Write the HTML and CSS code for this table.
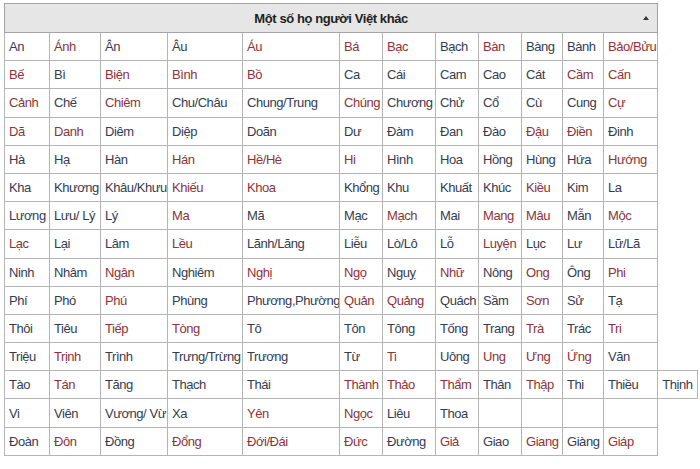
FILE: index.html
```html
<!DOCTYPE html>
<html lang="vi">
<head>
<meta charset="utf-8">
<title>Một số họ người Việt khác</title>
<link rel="stylesheet" href="styles.css">
</head>
<body>
<table class="navbox">
<colgroup>
<col class="c45"><col class="c51"><col class="c67"><col class="c75"><col class="c97"><col class="c43"><col class="c53"><col class="c43"><col class="c43"><col class="c41"><col class="c41"><col class="c54"><col class="c40">
</colgroup>
<tr class="head-row">
<th class="head" colspan="12"><div class="caption"><span class="spacer"></span><span class="title">Một số họ người Việt khác</span><span class="toggle"></span></div></th>
</tr>
<tr><td><a class="lk">An</a></td><td><a class="new">Ánh</a></td><td><a class="lk">Ân</a></td><td><a class="lk">Âu</a></td><td><a class="new">Áu</a></td><td><a class="new">Bá</a></td><td><a class="new">Bạc</a></td><td><a class="lk">Bạch</a></td><td><a class="new">Bàn</a></td><td><a class="lk">Bàng</a></td><td><a class="lk">Bành</a></td><td><a class="new">Bảo/Bửu</a></td></tr>
<tr><td><a class="new">Bế</a></td><td><a class="lk">Bì</a></td><td><a class="new">Biện</a></td><td><a class="new">Bình</a></td><td><a class="new">Bồ</a></td><td><a class="lk">Ca</a></td><td><a class="lk">Cái</a></td><td><a class="lk">Cam</a></td><td><a class="lk">Cao</a></td><td><a class="lk">Cát</a></td><td><a class="new">Cầm</a></td><td><a class="new">Cấn</a></td></tr>
<tr><td><a class="new">Cảnh</a></td><td><a class="lk">Chế</a></td><td><a class="new">Chiêm</a></td><td><a class="lk">Chu/Châu</a></td><td><a class="lk">Chung/Trung</a></td><td><a class="new">Chúng</a></td><td><a class="lk">Chương</a></td><td><a class="lk">Chử</a></td><td><a class="lk">Cổ</a></td><td><a class="lk">Cù</a></td><td><a class="lk">Cung</a></td><td><a class="new">Cự</a></td></tr>
<tr><td><a class="new">Dã</a></td><td><a class="new">Danh</a></td><td><a class="lk">Diêm</a></td><td><a class="lk">Diệp</a></td><td><a class="lk">Doãn</a></td><td><a class="lk">Dư</a></td><td><a class="lk">Đàm</a></td><td><a class="lk">Đan</a></td><td><a class="lk">Đào</a></td><td><a class="new">Đậu</a></td><td><a class="new">Điền</a></td><td><a class="lk">Đinh</a></td></tr>
<tr><td><a class="lk">Hà</a></td><td><a class="lk">Hạ</a></td><td><a class="lk">Hàn</a></td><td><a class="new">Hán</a></td><td><a class="new">Hề/Hè</a></td><td><a class="new">Hi</a></td><td><a class="lk">Hình</a></td><td><a class="lk">Hoa</a></td><td><a class="lk">Hồng</a></td><td><a class="lk">Hùng</a></td><td><a class="lk">Hứa</a></td><td><a class="new">Hướng</a></td></tr>
<tr><td><a class="lk">Kha</a></td><td><a class="lk">Khương</a></td><td><a class="lk">Khâu/Khưu</a></td><td><a class="new">Khiếu</a></td><td><a class="new">Khoa</a></td><td><a class="lk">Khổng</a></td><td><a class="lk">Khu</a></td><td><a class="lk">Khuất</a></td><td><a class="lk">Khúc</a></td><td><a class="new">Kiều</a></td><td><a class="lk">Kim</a></td><td><a class="lk">La</a></td></tr>
<tr><td><a class="lk">Lương</a></td><td><a class="lk">Lưu/ Lý</a></td><td><a class="lk">Lý</a></td><td><a class="new">Ma</a></td><td><a class="lk">Mã</a></td><td><a class="lk">Mạc</a></td><td><a class="new">Mạch</a></td><td><a class="lk">Mai</a></td><td><a class="new">Mang</a></td><td><a class="new">Mâu</a></td><td><a class="lk">Mẫn</a></td><td><a class="new">Mộc</a></td></tr>
<tr><td><a class="new">Lạc</a></td><td><a class="lk">Lại</a></td><td><a class="lk">Lâm</a></td><td><a class="new">Lều</a></td><td><a class="lk">Lãnh/Lăng</a></td><td><a class="lk">Liễu</a></td><td><a class="lk">Lò/Lô</a></td><td><a class="lk">Lỗ</a></td><td><a class="new">Luyện</a></td><td><a class="lk">Lục</a></td><td><a class="lk">Lư</a></td><td><a class="lk">Lữ/Lã</a></td></tr>
<tr><td><a class="lk">Ninh</a></td><td><a class="lk">Nhâm</a></td><td><a class="new">Ngân</a></td><td><a class="lk">Nghiêm</a></td><td><a class="new">Nghị</a></td><td><a class="new">Ngọ</a></td><td><a class="lk">Nguỵ</a></td><td><a class="new">Nhữ</a></td><td><a class="lk">Nông</a></td><td><a class="new">Ong</a></td><td><a class="lk">Ông</a></td><td><a class="new">Phi</a></td></tr>
<tr><td><a class="lk">Phí</a></td><td><a class="lk">Phó</a></td><td><a class="new">Phú</a></td><td><a class="lk">Phùng</a></td><td><a class="lk">Phương,Phường</a></td><td><a class="new">Quản</a></td><td><a class="new">Quảng</a></td><td><a class="lk">Quách</a></td><td><a class="lk">Sầm</a></td><td><a class="new">Sơn</a></td><td><a class="lk">Sử</a></td><td><a class="lk">Tạ</a></td></tr>
<tr><td><a class="lk">Thôi</a></td><td><a class="lk">Tiêu</a></td><td><a class="new">Tiếp</a></td><td><a class="new">Tòng</a></td><td><a class="lk">Tô</a></td><td><a class="lk">Tôn</a></td><td><a class="lk">Tông</a></td><td><a class="lk">Tống</a></td><td><a class="lk">Trang</a></td><td><a class="new">Trà</a></td><td><a class="lk">Trác</a></td><td><a class="new">Tri</a></td></tr>
<tr><td><a class="lk">Triệu</a></td><td><a class="new">Trịnh</a></td><td><a class="lk">Trình</a></td><td><a class="lk">Trưng/Trừng</a></td><td><a class="lk">Trương</a></td><td><a class="lk">Từ</a></td><td><a class="new">Ti</a></td><td><a class="lk">Uông</a></td><td><a class="new">Ung</a></td><td><a class="new">Ưng</a></td><td><a class="new">Ứng</a></td><td><a class="lk">Văn</a></td></tr>
<tr><td><a class="lk">Tào</a></td><td><a class="new">Tán</a></td><td><a class="lk">Tăng</a></td><td><a class="lk">Thạch</a></td><td><a class="lk">Thái</a></td><td><a class="new">Thành</a></td><td><a class="new">Thảo</a></td><td><a class="new">Thẩm</a></td><td><a class="lk">Thân</a></td><td><a class="new">Thập</a></td><td><a class="lk">Thi</a></td><td><a class="lk">Thiều</a></td><td><a class="lk">Thịnh</a></td></tr>
<tr><td><a class="lk">Vi</a></td><td><a class="lk">Viên</a></td><td><a class="lk">Vương/ Vừ</a></td><td><a class="lk">Xa</a></td><td><a class="new">Yên</a></td><td><a class="new">Ngọc</a></td><td><a class="lk">Liêu</a></td><td><a class="lk">Thoa</a></td><td></td><td></td><td></td><td></td></tr>
<tr><td><a class="lk">Đoàn</a></td><td><a class="new">Đôn</a></td><td><a class="lk">Đồng</a></td><td><a class="new">Đổng</a></td><td><a class="new">Đới/Đái</a></td><td><a class="new">Đức</a></td><td><a class="lk">Đường</a></td><td><a class="new">Giả</a></td><td><a class="lk">Giao</a></td><td><a class="new">Giang</a></td><td><a class="lk">Giàng</a></td><td><a class="new">Giáp</a></td></tr>
</table>
</body>
</html>
```
FILE: styles.css
```css
html, body {
  background: #ffffff;
}
body {
  margin: 0;
  padding: 3px 4px;
  font-family: "Liberation Sans", Arial, sans-serif;
}
.navbox {
  border-collapse: collapse;
  table-layout: fixed;
  width: 693px;
  font-size: 13px;
  letter-spacing: -0.45px;
}
.c45 { width: 45px; }
.c51 { width: 51px; }
.c67 { width: 67px; }
.c75 { width: 75px; }
.c97 { width: 97px; }
.c43 { width: 43px; }
.c53 { width: 53px; }
.c41 { width: 41px; }
.c54 { width: 54px; }
.c40 { width: 40px; }
.head {
  background: #e6e6e6;
  border: 1px solid #a4a4a4;
  padding: 0 6px;
  font-weight: bold;
  color: #222222;
}
.caption {
  display: grid;
  grid-template-columns: 1fr auto 1fr;
  align-items: center;
}
.title {
  font-size: 13px;
  letter-spacing: -0.4px;
}
.toggle {
  justify-self: end;
  width: 0;
  height: 0;
  border-left: 3px solid transparent;
  border-right: 3px solid transparent;
  border-bottom: 4px solid #333333;
  margin-right: 2px;
}
.navbox tr {
  height: 28.2px;
}
.navbox tr.head-row {
  height: 29px;
}
.navbox td {
  border: 1px solid #b4b4b4;
  padding: 0 0 0 4px;
  white-space: nowrap;
  overflow: hidden;
  vertical-align: middle;
}
.lk {
  color: #363c50;
  text-decoration: none;
}
.new {
  color: #8e3338;
  text-decoration: none;
}
```
